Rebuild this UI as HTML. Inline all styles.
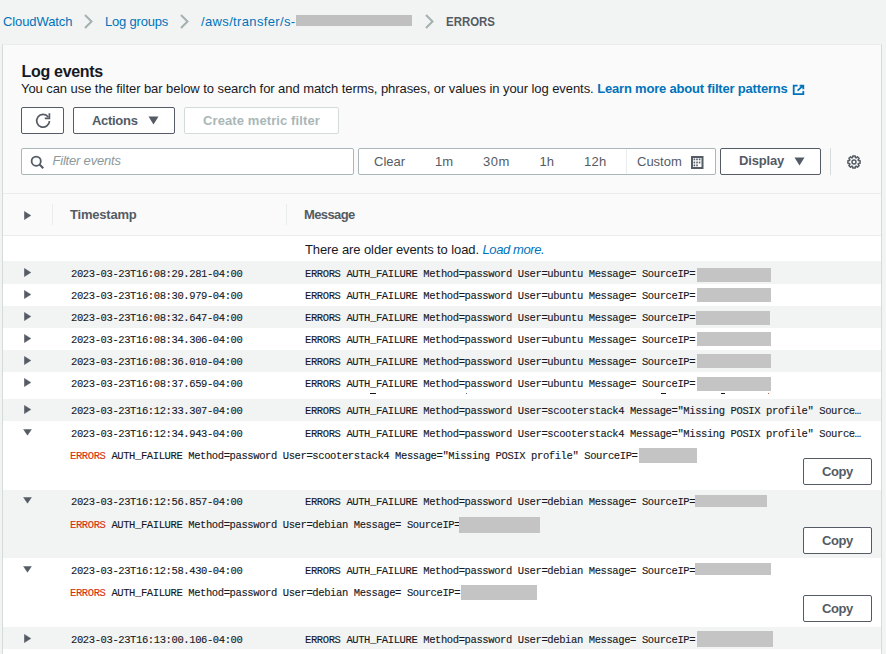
<!DOCTYPE html>
<html><head><meta charset="utf-8">
<style>
html,body{margin:0;padding:0;}
body{width:886px;height:654px;overflow:hidden;background:#f2f3f3;position:relative;font-family:"Liberation Sans",sans-serif;color:#16191f;font-size:13px;}
.a{position:absolute;white-space:pre;line-height:13px;}
.lnk{color:#0073bb;}
.chev{position:absolute;}
.rd{position:absolute;background:#c4c4c4;}
#panel{position:absolute;left:2px;top:44px;width:878px;height:620px;background:#fafafa;border-left:1px solid #d5dbdb;border-right:1px solid #d5dbdb;border-top:1px solid #eaeded;}
.btn{position:absolute;box-sizing:border-box;border:1px solid #545b64;border-radius:2px;background:#fff;}
.bt{font-weight:bold;color:#545b64;}
.m{position:absolute;white-space:pre;line-height:11px;font-family:"Liberation Mono",monospace;font-size:10.5px;letter-spacing:-0.39px;color:#16191f;-webkit-text-stroke-width:0.12px;}
.row{position:absolute;left:3px;width:878px;}
.s{background:#f2f3f3;}
.w{background:#fff;}
.red{color:#d6300f;}
</style></head><body>
<!-- breadcrumb -->
<div class="a lnk" style="left:3px;top:14.5px;letter-spacing:-0.1px">CloudWatch</div>
<svg class="chev" style="left:83px;top:14px" width="11" height="15" viewBox="0 0 11 15"><path d="M2 1 L8.5 7.5 L2 14" fill="none" stroke="#a4b0b1" stroke-width="2"/></svg>
<div class="a lnk" style="left:105px;top:14.5px;letter-spacing:-0.2px">Log groups</div>
<svg class="chev" style="left:179px;top:14px" width="11" height="15" viewBox="0 0 11 15"><path d="M2 1 L8.5 7.5 L2 14" fill="none" stroke="#a4b0b1" stroke-width="2"/></svg>
<div class="a lnk" style="left:201px;top:14.5px;letter-spacing:0.35px">/aws/transfer/s-</div>
<div class="rd" style="left:296px;top:15px;width:116px;height:11px;background:#c0c0c0"></div>
<svg class="chev" style="left:424px;top:14px" width="11" height="15" viewBox="0 0 11 15"><path d="M2 1 L8.5 7.5 L2 14" fill="none" stroke="#a4b0b1" stroke-width="2"/></svg>
<div class="a" style="left:446px;top:14.5px;font-weight:bold;color:#545b64;transform:scaleX(0.88);transform-origin:0 0">ERRORS</div>

<div id="panel"></div>

<!-- header -->
<div class="a" style="left:21.5px;top:63.6px;font-size:16px;line-height:16px;font-weight:bold;letter-spacing:-0.3px">Log events</div>
<div class="a" style="left:21px;top:82px;letter-spacing:-0.07px">You can use the filter bar below to search for and match terms, phrases, or values in your log events. <span class="lnk" style="font-weight:bold;letter-spacing:-0.19px">Learn more about filter patterns</span></div>
<svg style="position:absolute;left:792px;top:84px" width="14" height="12" viewBox="0 0 14 12"><path d="M5.6 1.7 H1.7 V10.2 H11.3 V7" fill="none" stroke="#0073bb" stroke-width="1.8"/><path d="M5.6 6.6 L11 1.6 M7.6 1.7 H11.3 V5.2" fill="none" stroke="#0073bb" stroke-width="1.8"/></svg>

<!-- buttons -->
<div class="btn" style="left:21px;top:107px;width:43px;height:27px;"></div>
<svg style="position:absolute;left:35px;top:112px" width="16" height="17" viewBox="0 0 16 17"><path d="M14.5 9 A6.4 6.4 0 1 1 13.2 4.9" fill="none" stroke="#545b64" stroke-width="1.7"/><path d="M9.8 6.3 H14.4 V1.2" fill="none" stroke="#545b64" stroke-width="1.7"/></svg>
<div class="btn" style="left:73px;top:107px;width:102px;height:27px;"></div>
<div class="a bt" style="left:92px;top:114px;letter-spacing:-0.3px">Actions</div>
<svg style="position:absolute;left:148px;top:116px" width="11" height="9" viewBox="0 0 11 9"><path d="M0.5 0.5 H10.5 L5.5 8.5 Z" fill="#545b64"/></svg>
<div class="btn" style="left:184px;top:107px;width:155px;height:27px;border-color:#d5dbdb;"></div>
<div class="a" style="left:203px;top:114px;font-weight:bold;color:#aab7b8;letter-spacing:0.1px">Create metric filter</div>

<!-- filter row -->
<div class="btn" style="left:21px;top:148px;width:333px;height:27px;border-color:#aab7b8;"></div>
<svg style="position:absolute;left:30px;top:155px" width="15" height="15" viewBox="0 0 15 15"><circle cx="6.2" cy="6.2" r="4.6" fill="none" stroke="#545b64" stroke-width="1.8"/><path d="M9.5 9.5 L13.3 13.3" stroke="#545b64" stroke-width="2"/></svg>
<div class="a" style="left:52.5px;top:154px;font-style:italic;color:#8b999a;letter-spacing:-0.2px">Filter events</div>

<div class="btn" style="left:358px;top:148px;width:358px;height:27px;border-color:#aab7b8;"></div>
<div class="a" style="left:374px;top:155px;color:#545b64">Clear</div>
<div class="a" style="left:435px;top:155px;color:#545b64">1m</div>
<div class="a" style="left:483px;top:155px;color:#545b64;letter-spacing:0.5px">30m</div>
<div class="a" style="left:539.5px;top:155px;color:#545b64">1h</div>
<div class="a" style="left:584px;top:155px;color:#545b64;letter-spacing:0.3px">12h</div>
<div style="position:absolute;left:626px;top:149px;width:1px;height:25px;background:#eaeded"></div>
<div class="a" style="left:637px;top:155px;color:#545b64">Custom</div>
<svg style="position:absolute;left:690px;top:155px" width="14" height="15" viewBox="0 0 14 15"><rect x="2" y="2" width="10.5" height="11" fill="none" stroke="#545b64" stroke-width="2"/><g fill="#545b64"><rect x="3.6" y="3.5" width="1.6" height="1.8"/><rect x="6.2" y="3.5" width="1.6" height="1.8"/><rect x="8.8" y="3.5" width="1.6" height="1.8"/><rect x="3.6" y="6.6" width="1.6" height="1.8"/><rect x="6.2" y="6.6" width="1.6" height="1.8"/><rect x="8.8" y="6.6" width="1.6" height="1.8"/><rect x="3.6" y="9.5" width="1.6" height="1.8"/><rect x="6.2" y="9.5" width="1.6" height="1.8"/></g></svg>

<div class="btn" style="left:720px;top:148px;width:101px;height:27px;"></div>
<div class="a bt" style="left:739px;top:154.3px;letter-spacing:-0.15px">Display</div>
<svg style="position:absolute;left:794px;top:157px" width="11" height="9" viewBox="0 0 11 9"><path d="M0.5 0.5 H10.5 L5.5 8.5 Z" fill="#545b64"/></svg>
<div style="position:absolute;left:830px;top:148px;width:1px;height:27px;background:#d5dbdb"></div>
<svg style="position:absolute;left:846px;top:153.5px" width="16" height="16" viewBox="0 0 16 16"><g fill="none" stroke="#545b64" stroke-width="1.5" stroke-linejoin="round"><path d="M12.49 6.63 L14.09 6.82 L14.09 9.18 L12.49 9.37 L12.15 10.21 L13.14 11.47 L11.47 13.14 L10.21 12.15 L9.37 12.49 L9.18 14.09 L6.82 14.09 L6.63 12.49 L5.79 12.15 L4.53 13.14 L2.86 11.47 L3.85 10.21 L3.51 9.37 L1.91 9.18 L1.91 6.82 L3.51 6.63 L3.85 5.79 L2.86 4.53 L4.53 2.86 L5.79 3.85 L6.63 3.51 L6.82 1.91 L9.18 1.91 L9.37 3.51 L10.21 3.85 L11.47 2.86 L13.14 4.53 L12.15 5.79 Z"/><circle cx="8" cy="8" r="2"/></g></svg>

<!-- table header -->
<div style="position:absolute;left:3px;top:193px;width:878px;height:1px;background:#eaeded"></div>
<div style="position:absolute;left:3px;top:235px;width:878px;height:1px;background:#eaeded"></div>
<svg style="position:absolute;left:24px;top:210.5px" width="8" height="9" viewBox="0 0 8 9"><path d="M0.4 0.4 L6.8 4.5 L0.4 8.6 Z" fill="#545b64" stroke="#545b64" stroke-width="0.5" stroke-linejoin="round"/></svg>
<div style="position:absolute;left:52px;top:204px;width:1px;height:21px;background:#eaeded"></div>
<div class="a bt" style="left:70px;top:208px;letter-spacing:-0.2px">Timestamp</div>
<div style="position:absolute;left:286px;top:204px;width:1px;height:21px;background:#eaeded"></div>
<div class="a bt" style="left:304px;top:208px;letter-spacing:-0.6px">Message</div>

<!-- table body -->
<div class="row w" style="top:236px;height:25px;"></div>
<div class="a" style="left:305px;top:243px;letter-spacing:-0.1px">There are older events to load. <span class="lnk" style="font-style:italic;letter-spacing:-0.4px">Load more.</span></div>

<div class="row s" style="top:261px;height:23px;"></div>
<div class="row w" style="top:284px;height:22px;"></div>
<div class="row s" style="top:306px;height:22px;"></div>
<div class="row w" style="top:328px;height:22px;"></div>
<div class="row s" style="top:350px;height:22px;"></div>
<div class="row w" style="top:372px;height:27px;"></div>
<div class="row s" style="top:399px;height:22px;"></div>
<div class="row w" style="top:421px;height:69px;"></div>
<div class="row s" style="top:490px;height:68px;"></div>
<div class="row w" style="top:558px;height:69px;"></div>
<div class="row s" style="top:627px;height:22px;"></div>
<div class="row w" style="top:649px;height:10px;"></div>
<svg style="position:absolute;left:24px;top:268px" width="8" height="9" viewBox="0 0 8 9"><path d="M0.4 0.4 L6.8 4.5 L0.4 8.6 Z" fill="#545b64" stroke="#545b64" stroke-width="0.5" stroke-linejoin="round"/></svg>
<div class="m" style="left:71px;top:268.70px;">2023-03-23T16:08:29.281-04:00</div>
<div class="m" style="left:305px;top:268.70px;">ERRORS AUTH_FAILURE Method=password User=ubuntu Message= SourceIP=</div>
<div class="rd" style="left:697px;top:268px;width:74px;height:14px"></div>
<svg style="position:absolute;left:24px;top:290px" width="8" height="9" viewBox="0 0 8 9"><path d="M0.4 0.4 L6.8 4.5 L0.4 8.6 Z" fill="#545b64" stroke="#545b64" stroke-width="0.5" stroke-linejoin="round"/></svg>
<div class="m" style="left:71px;top:290.70px;">2023-03-23T16:08:30.979-04:00</div>
<div class="m" style="left:305px;top:290.70px;">ERRORS AUTH_FAILURE Method=password User=ubuntu Message= SourceIP=</div>
<div class="rd" style="left:697px;top:288px;width:74px;height:14px"></div>
<svg style="position:absolute;left:24px;top:312px" width="8" height="9" viewBox="0 0 8 9"><path d="M0.4 0.4 L6.8 4.5 L0.4 8.6 Z" fill="#545b64" stroke="#545b64" stroke-width="0.5" stroke-linejoin="round"/></svg>
<div class="m" style="left:71px;top:312.70px;">2023-03-23T16:08:32.647-04:00</div>
<div class="m" style="left:305px;top:312.70px;">ERRORS AUTH_FAILURE Method=password User=ubuntu Message= SourceIP=</div>
<div class="rd" style="left:696px;top:311px;width:74px;height:14px"></div>
<svg style="position:absolute;left:24px;top:334px" width="8" height="9" viewBox="0 0 8 9"><path d="M0.4 0.4 L6.8 4.5 L0.4 8.6 Z" fill="#545b64" stroke="#545b64" stroke-width="0.5" stroke-linejoin="round"/></svg>
<div class="m" style="left:71px;top:334.70px;">2023-03-23T16:08:34.306-04:00</div>
<div class="m" style="left:305px;top:334.70px;">ERRORS AUTH_FAILURE Method=password User=ubuntu Message= SourceIP=</div>
<div class="rd" style="left:697px;top:332px;width:74px;height:14px"></div>
<svg style="position:absolute;left:24px;top:356px" width="8" height="9" viewBox="0 0 8 9"><path d="M0.4 0.4 L6.8 4.5 L0.4 8.6 Z" fill="#545b64" stroke="#545b64" stroke-width="0.5" stroke-linejoin="round"/></svg>
<div class="m" style="left:71px;top:356.70px;">2023-03-23T16:08:36.010-04:00</div>
<div class="m" style="left:305px;top:356.70px;">ERRORS AUTH_FAILURE Method=password User=ubuntu Message= SourceIP=</div>
<div class="rd" style="left:697px;top:354px;width:74px;height:14px"></div>
<svg style="position:absolute;left:24px;top:378px" width="8" height="9" viewBox="0 0 8 9"><path d="M0.4 0.4 L6.8 4.5 L0.4 8.6 Z" fill="#545b64" stroke="#545b64" stroke-width="0.5" stroke-linejoin="round"/></svg>
<div class="m" style="left:71px;top:378.70px;">2023-03-23T16:08:37.659-04:00</div>
<div class="m" style="left:305px;top:378.70px;">ERRORS AUTH_FAILURE Method=password User=ubuntu Message= SourceIP=</div>
<div class="rd" style="left:697px;top:377px;width:74px;height:14px"></div>
<svg style="position:absolute;left:24px;top:405px" width="8" height="9" viewBox="0 0 8 9"><path d="M0.4 0.4 L6.8 4.5 L0.4 8.6 Z" fill="#545b64" stroke="#545b64" stroke-width="0.5" stroke-linejoin="round"/></svg>
<div class="m" style="left:71px;top:405.70px;">2023-03-23T16:12:33.307-04:00</div>
<div class="m" style="left:305px;top:405.70px;">ERRORS AUTH_FAILURE Method=password User=scooterstack4 Message=&quot;Missing POSIX profile&quot; Source…</div>
<div style="position:absolute;left:370px;top:393px;width:6px;height:1px;background:#16191f"></div>
<div style="position:absolute;left:466px;top:393px;width:1px;height:1px;background:#5a6a9a"></div>
<div style="position:absolute;left:661px;top:393px;width:5px;height:1px;background:#16191f"></div>
<div style="position:absolute;left:721px;top:393px;width:4px;height:1px;background:#16191f"></div>
<div style="position:absolute;left:768px;top:393px;width:1px;height:1px;background:#c06050"></div>
<svg style="position:absolute;left:24px;top:634px" width="8" height="9" viewBox="0 0 8 9"><path d="M0.4 0.4 L6.8 4.5 L0.4 8.6 Z" fill="#545b64" stroke="#545b64" stroke-width="0.5" stroke-linejoin="round"/></svg>
<div class="m" style="left:71px;top:634.70px;">2023-03-23T16:13:00.106-04:00</div>
<div class="m" style="left:305px;top:634.70px;">ERRORS AUTH_FAILURE Method=password User=debian Message= SourceIP=</div>
<div class="rd" style="left:697px;top:631px;width:76px;height:16px"></div>
<svg style="position:absolute;left:23.3px;top:428.7px" width="10" height="8" viewBox="0 0 10 8"><path d="M0.6 0.4 H8.4 L4.5 6.2 Z" fill="#545b64" stroke="#545b64" stroke-width="0.5" stroke-linejoin="round"/></svg>
<div class="m" style="left:71px;top:428.70px;">2023-03-23T16:12:34.943-04:00</div>
<div class="m" style="left:305px;top:428.70px;">ERRORS AUTH_FAILURE Method=password User=scooterstack4 Message=&quot;Missing POSIX profile&quot; Source…</div>
<div class="m" style="left:70px;top:450.70px;"><span class="red">ERRORS</span> AUTH_FAILURE Method=password User=scooterstack4 Message=&quot;Missing POSIX profile&quot; SourceIP=</div>
<div class="rd" style="left:639px;top:448px;width:58px;height:15px"></div>
<div class="btn" style="left:803px;top:458px;width:69px;height:27px;"></div>
<div class="a bt" style="left:822px;top:464.5px;letter-spacing:-0.4px">Copy</div>
<svg style="position:absolute;left:23.3px;top:496.7px" width="10" height="8" viewBox="0 0 10 8"><path d="M0.6 0.4 H8.4 L4.5 6.2 Z" fill="#545b64" stroke="#545b64" stroke-width="0.5" stroke-linejoin="round"/></svg>
<div class="m" style="left:71px;top:496.70px;">2023-03-23T16:12:56.857-04:00</div>
<div class="m" style="left:305px;top:496.70px;">ERRORS AUTH_FAILURE Method=password User=debian Message= SourceIP=</div>
<div class="m" style="left:70px;top:519.70px;"><span class="red">ERRORS</span> AUTH_FAILURE Method=password User=debian Message= SourceIP=</div>
<div class="rd" style="left:695px;top:495px;width:72px;height:12px"></div>
<div class="rd" style="left:459px;top:517px;width:81px;height:16px"></div>
<div class="btn" style="left:803px;top:527px;width:69px;height:27px;"></div>
<div class="a bt" style="left:822px;top:533.5px;letter-spacing:-0.4px">Copy</div>
<svg style="position:absolute;left:23.3px;top:565.7px" width="10" height="8" viewBox="0 0 10 8"><path d="M0.6 0.4 H8.4 L4.5 6.2 Z" fill="#545b64" stroke="#545b64" stroke-width="0.5" stroke-linejoin="round"/></svg>
<div class="m" style="left:71px;top:565.70px;">2023-03-23T16:12:58.430-04:00</div>
<div class="m" style="left:305px;top:565.70px;">ERRORS AUTH_FAILURE Method=password User=debian Message= SourceIP=</div>
<div class="m" style="left:70px;top:587.70px;"><span class="red">ERRORS</span> AUTH_FAILURE Method=password User=debian Message= SourceIP=</div>
<div class="rd" style="left:695px;top:563px;width:76px;height:12px"></div>
<div class="rd" style="left:461px;top:585px;width:76px;height:15px"></div>
<div class="btn" style="left:803px;top:595px;width:69px;height:27px;"></div>
<div class="a bt" style="left:822px;top:601.5px;letter-spacing:-0.4px">Copy</div>

</body></html>
